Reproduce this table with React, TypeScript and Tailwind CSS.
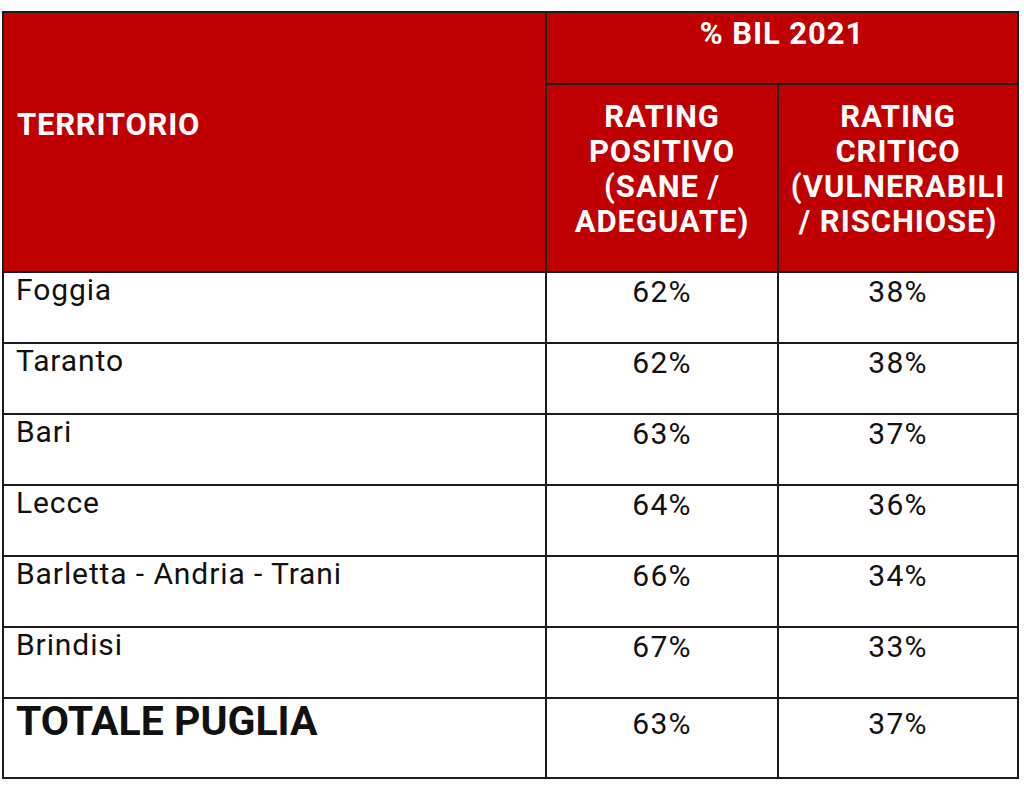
import React from 'react';

const rows = [
  { name: 'Foggia', pos: '62%', crit: '38%' },
  { name: 'Taranto', pos: '62%', crit: '38%' },
  { name: 'Bari', pos: '63%', crit: '37%' },
  { name: 'Lecce', pos: '64%', crit: '36%' },
  { name: 'Barletta - Andria - Trani', pos: '66%', crit: '34%' },
  { name: 'Brindisi', pos: '67%', crit: '33%' },
];

const font = { fontFamily: 'Roboto, "Liberation Sans", sans-serif' };

export default function App() {
  return (
    <div className="w-[1024px] h-[791px] bg-white pt-[11px] pl-[2px]" style={font}>
      <div className="w-[1017px] bg-[#1c1c1c] p-[2px] grid grid-cols-[541px_230px_238px] grid-rows-[70px_186px_repeat(6,69px)_78px] gap-[2px]">
        <div className="row-span-2 bg-[#c00000] text-white font-bold text-[31px] tracking-[0.025em] pl-[13px] pt-[96px] leading-none">
          TERRITORIO
        </div>
        <div className="col-span-2 bg-[#c00000] text-white font-bold text-[31px] tracking-[0.03em] text-center pt-[3px] leading-[36px]">
          % BIL 2021
        </div>
        <div className="bg-[#c00000] text-white font-bold text-[31px] tracking-[0.03em] text-center pt-[14px] leading-[35px] whitespace-nowrap">
          RATING<br />POSITIVO<br />(SANE /<br />ADEGUATE)
        </div>
        <div className="bg-[#c00000] text-white font-bold text-[31px] tracking-[0.03em] text-center pt-[14px] leading-[35px] whitespace-nowrap">
          RATING<br />CRITICO<br />(VULNERABILI<br />/ RISCHIOSE)
        </div>
        {rows.map(r => (
          <React.Fragment key={r.name}>
            <div className="bg-white text-[#111] text-[30px] tracking-[0.03em] pl-[12px] pt-0 leading-[34px]">{r.name}</div>
            <div className="bg-white text-[#111] text-[30px] tracking-[0.04em] text-center pt-[2px] leading-[34px]">{r.pos}</div>
            <div className="bg-white text-[#111] text-[30px] tracking-[0.04em] text-center pt-[2px] leading-[34px]">{r.crit}</div>
          </React.Fragment>
        ))}
        <div className="bg-white text-[#111] text-[41px] font-bold pl-[12px] pt-0 leading-[44px]">TOTALE PUGLIA</div>
        <div className="bg-white text-[#111] text-[30px] tracking-[0.04em] text-center pt-[8px] leading-[34px]">63%</div>
        <div className="bg-white text-[#111] text-[30px] tracking-[0.04em] text-center pt-[8px] leading-[34px]">37%</div>
      </div>
    </div>
  );
}
